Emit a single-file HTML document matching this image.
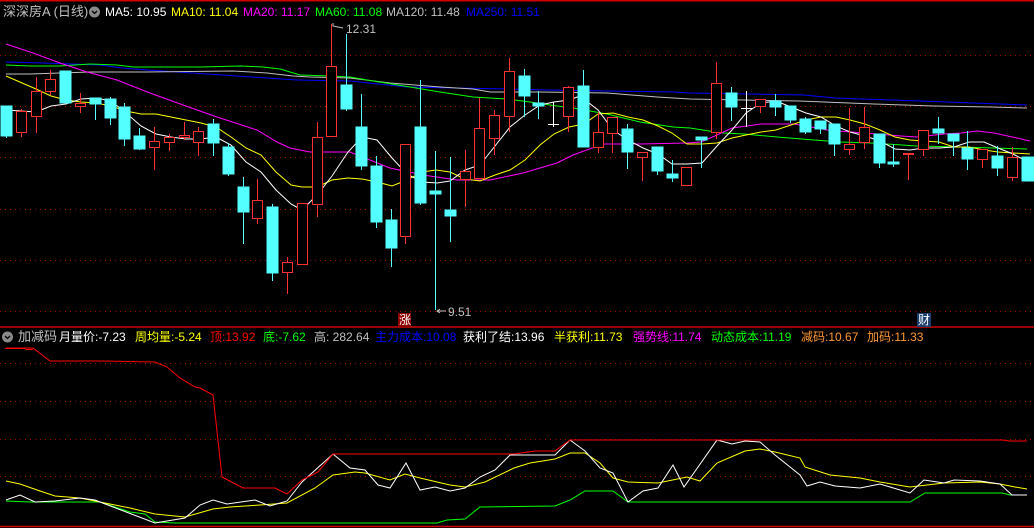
<!DOCTYPE html>
<html><head><meta charset="utf-8"><style>
html,body{margin:0;padding:0;background:#000;width:1034px;height:528px;overflow:hidden}
svg{position:absolute;left:0;top:0}
.t{position:absolute;white-space:nowrap;font-family:"Liberation Sans","Noto Sans CJK SC",sans-serif;font-size:12px;line-height:14px}
</style></head><body>
<svg width="1034" height="528" viewBox="0 0 1034 528">
<g stroke="#a00000" stroke-dasharray="1 4" stroke-width="1">
<line x1="0" y1="55.5" x2="1034" y2="55.5"/><line x1="0" y1="106.5" x2="1034" y2="106.5"/><line x1="0" y1="157.5" x2="1034" y2="157.5"/><line x1="0" y1="209.5" x2="1034" y2="209.5"/><line x1="0" y1="260.5" x2="1034" y2="260.5"/><line x1="0" y1="311.5" x2="1034" y2="311.5"/>
<line x1="0" y1="363.5" x2="1034" y2="363.5"/><line x1="0" y1="401.5" x2="1034" y2="401.5"/><line x1="0" y1="439.5" x2="1034" y2="439.5"/><line x1="0" y1="476.5" x2="1034" y2="476.5"/>
</g>
<g stroke="#d00000" stroke-width="1.5"><line x1="0" y1="0.75" x2="1034" y2="0.75"/><line x1="0" y1="327" x2="1034" y2="327"/><line x1="0" y1="526.5" x2="1034" y2="526.5"/></g>
<g fill="none" stroke-width="1">
<polyline stroke="#0000ff" points="6,62 43,63 72,64 100,65 122,68 147,70 177,72 207,74 237,76 267,78 297,80 350,81 407,87 457,88 507,89 547,90 607,91 673,92 690,93 804,95 835,98 920,101 1000,104 1027,105"/>
<polyline stroke="#c0c0c0" points="6,74 30,74 60,73 90,72 147,72 233,71 267,73 293,76 310,77 350,78 390,83 440,87 473,89 490,92 540,92 607,93 657,97 690,99 799,101 874,104 934,106 991,107 1027,108"/>
<polyline stroke="#00ff00" points="6,65 30,66 60,66 90,64 117,65 133,67 200,67 240,66 263,67 280,69 300,75 330,76 350,77 373,81 410,87 440,92 473,97 507,99 530,102 557,106 573,108 607,114 640,122 673,127 690,128 709,131 724,133 744,134 777,137 814,140 841,142 871,143 917,146 961,147 1027,149"/>
<polyline stroke="#ff00ff" points="6,44 33,53 60,63 87,72 117,80 150,93 183,105 217,117 257,130 277,142 290,148 310,152 350,152 390,168 423,175 457,180 490,180 523,173 557,163 573,155 603,144 640,144 687,143 701,142 717,135 732,128 747,126 761,124 794,124 811,127 827,130 851,132 877,134 901,136 917,137 944,134 961,133 977,131 994,133 1017,138 1030,141"/>
<polyline stroke="#ffff00" points="6,76 36,89 51,96 66,100 81,102 96,103 111,106 126,111 141,114 156,114 171,117 186,120 201,123 216,127 231,137 246,148 261,155 276,172 291,185 302,187 317,187 332,180 348,178 362,179 377,182 392,186 407,180 422,172 436,170 450,172 465,179 480,181 495,175 510,170 525,160 540,145 554,134 569,127 584,124 598,114 613,113 628,117 643,120 658,126 672,133 687,144 702,144 717,143 732,138 746,135 761,132 776,130 791,125 806,120 821,117 836,117 850,120 865,124 880,130 895,137 910,140 924,141 939,142 954,147 969,147 984,150 998,152 1013,153 1030,154"/>
<polyline stroke="#ffffff" points="6,110 36,112 51,106 66,104 81,99 96,98 111,101 126,113 141,126 156,134 171,137 186,139 201,139 216,137 231,145 246,162 261,172 276,190 291,204 302,210 317,195 332,176 348,152 362,137 377,140 392,158 407,174 422,182 437,183 450,181 465,170 480,165 495,146 510,127 525,115 540,105 554,102 569,100 580,96 598,110 613,130 628,140 643,148 658,154 672,164 687,164 702,163 717,146 732,130 746,113 761,103 776,101 791,107 806,113 821,117 836,126 850,132 865,136 880,141 895,149 910,150 924,148 939,148 954,147 969,142 984,142 998,148 1013,154 1030,163"/>
</g>
<g stroke="#54ffff" fill="#54ffff">
<line x1="6.5" y1="106" x2="6.5" y2="138"/><rect x="1" y="106" width="11" height="30"/>
<line x1="65.5" y1="71" x2="65.5" y2="103"/><rect x="60" y="71" width="11" height="32"/>
<line x1="95.5" y1="98" x2="95.5" y2="120"/><rect x="90" y="98" width="11" height="6"/>
<line x1="110.5" y1="97" x2="110.5" y2="125"/><rect x="105" y="99" width="11" height="19"/>
<line x1="124.5" y1="103" x2="124.5" y2="146"/><rect x="119" y="107" width="11" height="32"/>
<line x1="139.5" y1="128" x2="139.5" y2="150"/><rect x="134" y="136" width="11" height="13"/>
<line x1="213.5" y1="119" x2="213.5" y2="156"/><rect x="208" y="124" width="11" height="19"/>
<line x1="228.5" y1="143" x2="228.5" y2="176"/><rect x="223" y="147" width="11" height="27"/>
<line x1="243.5" y1="177" x2="243.5" y2="244"/><rect x="238" y="187" width="11" height="25"/>
<line x1="272.5" y1="204" x2="272.5" y2="281"/><rect x="267" y="207" width="11" height="66"/>
<line x1="346.5" y1="34" x2="346.5" y2="111"/><rect x="341" y="85" width="11" height="24"/>
<line x1="361.5" y1="94" x2="361.5" y2="170"/><rect x="356" y="127" width="11" height="39"/>
<line x1="376.5" y1="156" x2="376.5" y2="228"/><rect x="371" y="166" width="11" height="56"/>
<line x1="391.5" y1="209" x2="391.5" y2="267"/><rect x="386" y="220" width="11" height="28"/>
<line x1="420.5" y1="80" x2="420.5" y2="205"/><rect x="415" y="127" width="11" height="76"/>
<line x1="435.5" y1="151" x2="435.5" y2="310"/><rect x="430" y="191" width="11" height="3"/>
<line x1="450.5" y1="157" x2="450.5" y2="242"/><rect x="445" y="210" width="11" height="6"/>
<line x1="524.5" y1="69" x2="524.5" y2="117"/><rect x="519" y="76" width="11" height="20"/>
<line x1="538.5" y1="91" x2="538.5" y2="119"/><rect x="533" y="103" width="11" height="3"/>
<line x1="583.5" y1="70" x2="583.5" y2="147"/><rect x="578" y="86" width="11" height="61"/>
<line x1="627.5" y1="124" x2="627.5" y2="169"/><rect x="622" y="129" width="11" height="23"/>
<line x1="657.5" y1="147" x2="657.5" y2="175"/><rect x="652" y="147" width="11" height="24"/>
<line x1="672.5" y1="160" x2="672.5" y2="182"/><rect x="667" y="174" width="11" height="4"/>
<line x1="701.5" y1="137" x2="701.5" y2="168"/><rect x="696" y="137" width="11" height="3"/>
<line x1="731.5" y1="87" x2="731.5" y2="121"/><rect x="726" y="93" width="11" height="14"/>
<line x1="775.5" y1="94" x2="775.5" y2="116"/><rect x="770" y="101" width="11" height="6"/>
<line x1="790.5" y1="106" x2="790.5" y2="123"/><rect x="785" y="106" width="11" height="14"/>
<line x1="805.5" y1="117" x2="805.5" y2="134"/><rect x="800" y="119" width="11" height="13"/>
<line x1="820.5" y1="121" x2="820.5" y2="134"/><rect x="815" y="121" width="11" height="8"/>
<line x1="834.5" y1="124" x2="834.5" y2="156"/><rect x="829" y="124" width="11" height="20"/>
<line x1="879.5" y1="134" x2="879.5" y2="168"/><rect x="874" y="134" width="11" height="29"/>
<line x1="893.5" y1="144" x2="893.5" y2="167"/><rect x="888" y="162" width="11" height="2"/>
<line x1="938.5" y1="117" x2="938.5" y2="144"/><rect x="933" y="129" width="11" height="4"/>
<line x1="953.5" y1="134" x2="953.5" y2="156"/><rect x="948" y="134" width="11" height="7"/>
<line x1="967.5" y1="131" x2="967.5" y2="170"/><rect x="962" y="148" width="11" height="11"/>
<line x1="997.5" y1="146" x2="997.5" y2="176"/><rect x="992" y="156" width="11" height="12"/>
<rect x="1022" y="157" width="12" height="24"/>
</g>
<g stroke="#ff3232" fill="#000" stroke-width="1">
<line x1="21.5" y1="109" x2="21.5" y2="137"/><rect x="16.5" y="111.5" width="10" height="21"/>
<line x1="36.5" y1="77" x2="36.5" y2="133"/><rect x="31.5" y="91.5" width="10" height="25"/>
<line x1="50.5" y1="70" x2="50.5" y2="95"/><rect x="45.5" y="79.5" width="10" height="12"/>
<line x1="80.5" y1="93" x2="80.5" y2="113"/><rect x="75.5" y="103.5" width="10" height="3"/>
<line x1="154.5" y1="127" x2="154.5" y2="170"/><rect x="149.5" y="141.5" width="10" height="6"/>
<line x1="169.5" y1="134" x2="169.5" y2="151"/><rect x="164.5" y="137.5" width="10" height="5"/>
<line x1="184.5" y1="122" x2="184.5" y2="140"/><rect x="179.5" y="135.5" width="10" height="2"/>
<line x1="198.5" y1="127" x2="198.5" y2="156"/><rect x="193.5" y="131.5" width="10" height="11"/>
<line x1="257.5" y1="179" x2="257.5" y2="224"/><rect x="252.5" y="200.5" width="10" height="18"/>
<line x1="287.5" y1="257" x2="287.5" y2="294"/><rect x="282.5" y="262.5" width="10" height="10"/>
<rect x="297.5" y="203.5" width="10" height="61"/>
<line x1="317.5" y1="122" x2="317.5" y2="217"/><rect x="312.5" y="137.5" width="10" height="67"/>
<line x1="331.5" y1="24" x2="331.5" y2="137"/><rect x="326.5" y="66.5" width="10" height="70"/>
<line x1="405.5" y1="144" x2="405.5" y2="244"/><rect x="400.5" y="144.5" width="10" height="92"/>
<line x1="465.5" y1="150" x2="465.5" y2="207"/><rect x="460.5" y="171.5" width="10" height="8"/>
<line x1="479.5" y1="98" x2="479.5" y2="179"/><rect x="474.5" y="128.5" width="10" height="50"/>
<line x1="494.5" y1="110" x2="494.5" y2="155"/><rect x="489.5" y="115.5" width="10" height="23"/>
<line x1="509.5" y1="58" x2="509.5" y2="132"/><rect x="504.5" y="71.5" width="10" height="45"/>
<line x1="568.5" y1="86" x2="568.5" y2="132"/><rect x="563.5" y="87.5" width="10" height="29"/>
<line x1="598.5" y1="112" x2="598.5" y2="153"/><rect x="593.5" y="132.5" width="10" height="15"/>
<line x1="612.5" y1="117" x2="612.5" y2="153"/><rect x="607.5" y="117.5" width="10" height="16"/>
<line x1="642.5" y1="152" x2="642.5" y2="181"/><rect x="637.5" y="152.5" width="10" height="5"/>
<rect x="681.5" y="167.5" width="10" height="18"/>
<line x1="716.5" y1="62" x2="716.5" y2="139"/><rect x="711.5" y="83.5" width="10" height="49"/>
<line x1="760.5" y1="99" x2="760.5" y2="113"/><rect x="755.5" y="99.5" width="10" height="7"/>
<line x1="849.5" y1="108" x2="849.5" y2="155"/><rect x="844.5" y="144.5" width="10" height="5"/>
<line x1="864.5" y1="107" x2="864.5" y2="149"/><rect x="859.5" y="127.5" width="10" height="15"/>
<line x1="908.5" y1="153" x2="908.5" y2="180"/><rect x="903.5" y="153.5" width="10" height="1" fill="#ff3232"/>
<line x1="923.5" y1="130" x2="923.5" y2="156"/><rect x="918.5" y="130.5" width="10" height="19"/>
<line x1="982.5" y1="149" x2="982.5" y2="168"/><rect x="977.5" y="149.5" width="10" height="10"/>
<line x1="1012.5" y1="147" x2="1012.5" y2="181"/><rect x="1007.5" y="157.5" width="10" height="20"/>
</g>
<g stroke="#ffffff"><line x1="553.5" y1="102" x2="553.5" y2="127"/><line x1="548" y1="124.5" x2="559" y2="124.5"/>
<line x1="746.5" y1="91" x2="746.5" y2="127"/><line x1="741" y1="108.5" x2="752" y2="108.5"/></g>
<g stroke="#c0c0c0" fill="none"><polyline points="333,23 333,26 343,28"/><polyline points="437,311 446,311"/><polyline points="440,309 437,311 440,313"/></g>
<text x="346" y="33" fill="#c0c0c0" font-family="Liberation Sans" font-size="12">12.31</text>
<text x="448" y="316" fill="#c0c0c0" font-family="Liberation Sans" font-size="12">9.51</text>
<rect x="398" y="313" width="13" height="14" fill="#8b0000"/>
<rect x="917" y="313" width="14" height="14" fill="#1c3f6e"/>
<circle cx="94.5" cy="12" r="5.5" fill="#8a8a8a"/><polyline points="92,11 94.5,13.5 97,11" stroke="#000" fill="none" stroke-width="1.3"/>
<circle cx="7.5" cy="337" r="5.5" fill="#8a8a8a"/><polyline points="5,336 7.5,338.5 10,336" stroke="#000" fill="none" stroke-width="1.3"/>
<line x1="5" y1="348.5" x2="25" y2="348.5" stroke="#ff0000"/><line x1="25" y1="349.5" x2="33" y2="349.5" stroke="#ff0000"/>
<g fill="none" stroke-width="1">
<polyline stroke="#00ff00" points="6,501 30,502 100,502 130,512 145,514 155,522 175,523 437,523 447,520 465,519 480,507 555,506 570,500 585,491 613,491 628,502 910,502 925,493 1002,493 1010,495 1027,495"/>
<polyline stroke="#ffff00" points="6,481 20,484 40,491 55,496 80,498 100,502 130,508 155,514 185,517 213,509 230,507 260,505 287,503 315,488 333,475 355,472 365,473 390,480 405,474 420,478 450,485 465,487 485,482 514,468 530,463 555,459 570,453 585,453 600,463 613,478 628,482 658,483 687,477 700,481 717,463 745,451 760,449 775,452 800,458 805,467 830,475 860,478 880,482 910,487 944,483 980,482 1000,484 1015,487 1027,489"/>
<polyline stroke="#ffffff" points="6,500 20,495 35,502 55,501 80,498 95,500 100,502 155,523 185,518 200,505 213,500 227,504 255,500 270,506 287,501 302,482 333,454 350,468 365,470 378,485 390,488 406,463 420,490 435,487 450,491 465,488 480,477 495,470 510,455 555,455 570,440 585,451 600,468 613,473 628,502 643,491 658,488 673,465 684,487 717,440 732,444 745,441 760,442 775,455 800,475 807,486 820,482 835,486 860,488 880,484 910,493 924,480 944,483 954,480 980,481 1000,484 1012,495 1027,495"/>
<polyline stroke="#ff0000" points="6,348 33,348 50,361 103,361 155,362 167,367 180,378 195,387 200,388 213,395 222,477 243,488 275,488 287,494 302,480 318,472 333,454 514,454 535,451 555,451 570,440 1002,440 1010,441 1027,441"/>
</g>
</svg>
<div class="t" style="left:3px;top:5px;color:#c0c0c0;font-size:13px">深深房A (日线)</div>
<div class="t" style="left:105px;top:5px;color:#fff">MA5: 10.95</div>
<div class="t" style="left:171px;top:5px;color:#ffff00">MA10: 11.04</div>
<div class="t" style="left:243px;top:5px;color:#ff00ff">MA20: 11.17</div>
<div class="t" style="left:315px;top:5px;color:#00ff00">MA60: 11.08</div>
<div class="t" style="left:386px;top:5px;color:#c0c0c0">MA120: 11.48</div>
<div class="t" style="left:466px;top:5px;color:#0000ff">MA250: 11.51</div>
<div class="t" style="left:399px;top:313px;color:#fff">涨</div>
<div class="t" style="left:918px;top:313px;color:#fff">财</div>
<div class="t" style="left:18px;top:330px;color:#c0c0c0;font-size:13px">加减码</div>
<div class="t" style="left:59px;top:330px;color:#fff">月量价:-7.23</div>
<div class="t" style="left:135px;top:330px;color:#ffff00">周均量:-5.24</div>
<div class="t" style="left:210px;top:330px;color:#ff0000">顶:13.92</div>
<div class="t" style="left:263px;top:330px;color:#00ff00">底:-7.62</div>
<div class="t" style="left:314px;top:330px;color:#c0c0c0">高: 282.64</div>
<div class="t" style="left:375px;top:330px;color:#0000ff">主力成本:10.08</div>
<div class="t" style="left:463px;top:330px;color:#fff">获利了结:13.96</div>
<div class="t" style="left:554px;top:330px;color:#ffff00">半获利:11.73</div>
<div class="t" style="left:633px;top:330px;color:#ff00ff">强势线:11.74</div>
<div class="t" style="left:711px;top:330px;color:#00ff00">动态成本:11.19</div>
<div class="t" style="left:801px;top:330px;color:#ff9933">减码:10.67</div>
<div class="t" style="left:867px;top:330px;color:#ff9933">加码:11.33</div>
</body></html>
